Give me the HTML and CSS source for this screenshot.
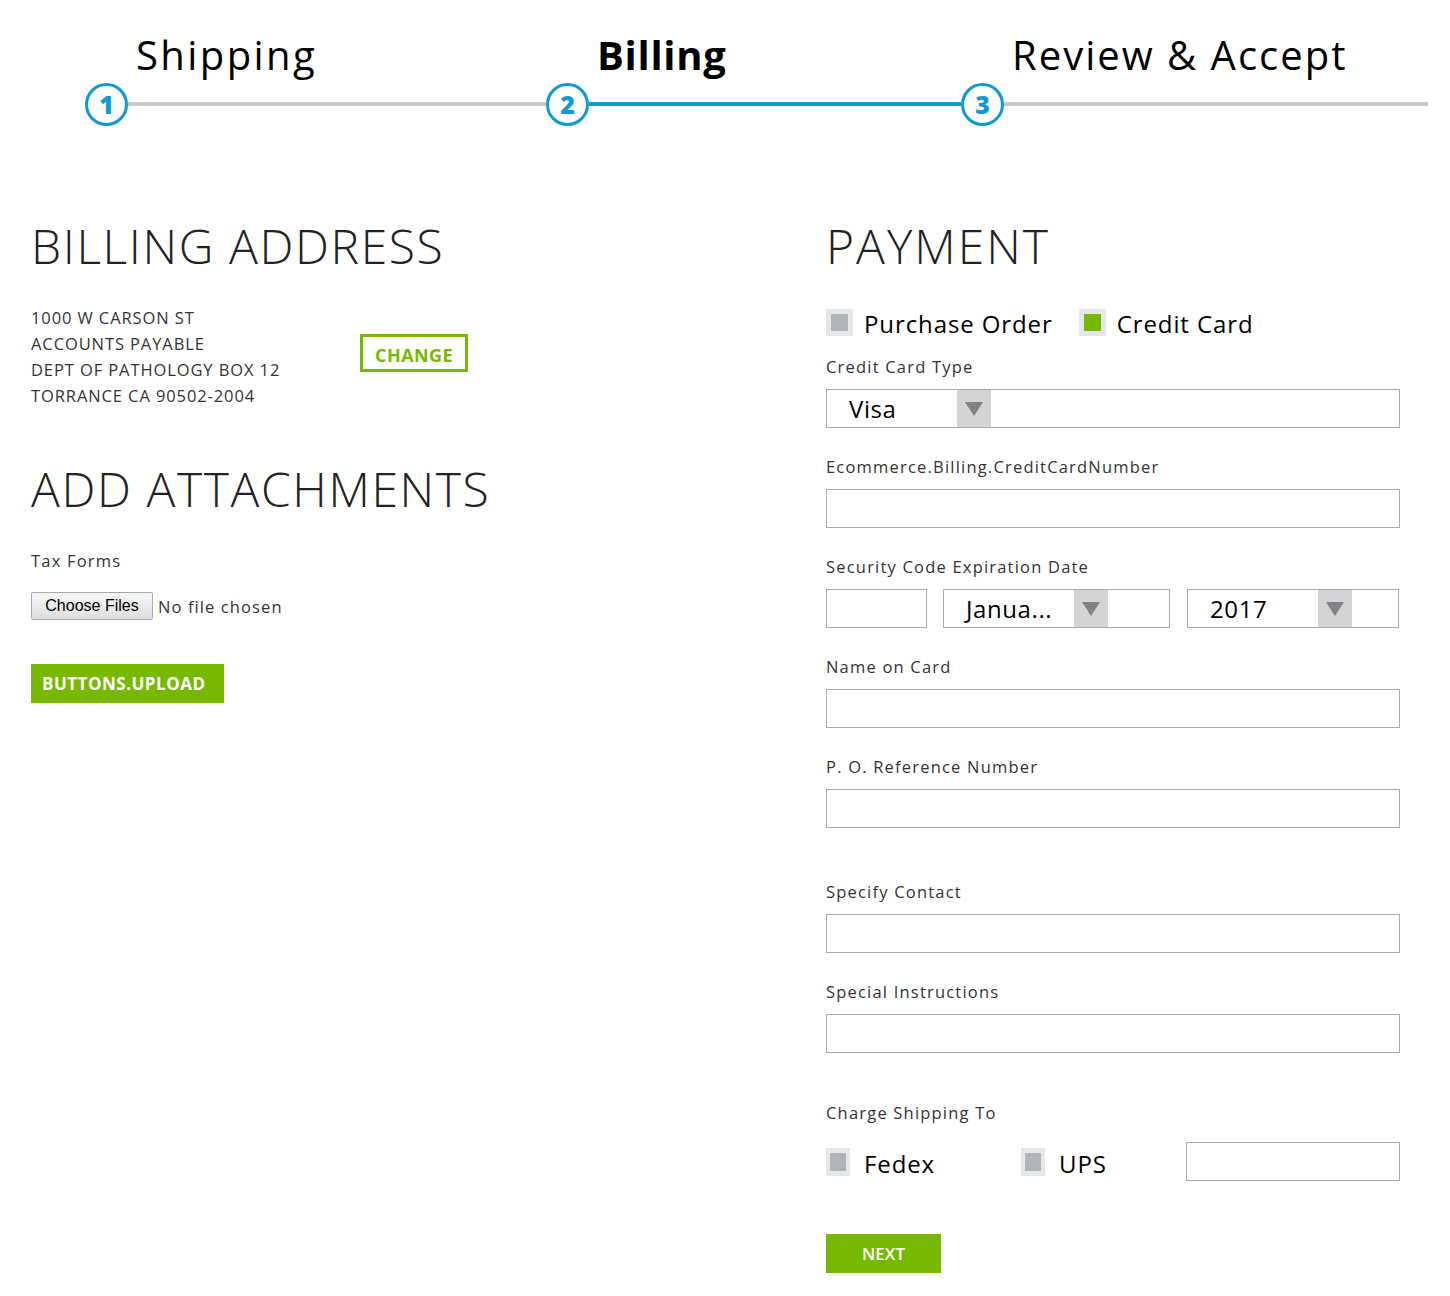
FILE: index.html
```html
<!DOCTYPE html>
<html lang="en">
<head>
  <meta charset="UTF-8" />
  <title>Checkout - Billing</title>
  <link rel="stylesheet" href="styles.css">
</head>
<body>
  <div class="stepper">
    <div class="step done">
      <div class="step-label">Shipping</div>
      <div class="track"><span class="dot">1</span><span class="bar"></span></div>
    </div>
    <div class="step current">
      <div class="step-label">Billing</div>
      <div class="track"><span class="dot">2</span><span class="bar"></span></div>
    </div>
    <div class="step last">
      <div class="step-label">Review &amp; Accept</div>
      <div class="track"><span class="dot">3</span><span class="bar"></span></div>
    </div>
  </div>

  <div class="main">
    <div class="left">
      <h2>BILLING ADDRESS</h2>
      <div class="address-row">
        <div class="address">
          1000 W CARSON ST<br>
          ACCOUNTS PAYABLE<br>
          DEPT OF PATHOLOGY BOX 12<br>
          TORRANCE CA 90502-2004
        </div>
        <button class="btn-outline">CHANGE</button>
      </div>

      <h2 class="attach-title">ADD ATTACHMENTS</h2>
      <div class="label">Tax Forms</div>
      <div class="file-row">
        <span class="file-btn">Choose Files</span>
        <span class="file-name">No file chosen</span>
      </div>
      <button class="btn-green upload">BUTTONS.UPLOAD</button>
    </div>

    <div class="right">
      <h2>PAYMENT</h2>
      <div class="check-row">
        <span class="check"><span class="box"></span>Purchase Order</span>
        <span class="check on"><span class="box"></span>Credit Card</span>
      </div>

      <div class="field">
        <div class="label">Credit Card Type</div>
        <div class="select"><span class="sel-text">Visa</span><span class="arrow"></span></div>
      </div>

      <div class="field">
        <div class="label">Ecommerce.Billing.CreditCardNumber</div>
        <div class="input"></div>
      </div>

      <div class="field">
        <div class="label">Security Code Expiration Date</div>
        <div class="exp-row">
          <div class="input cvv"></div>
          <div class="select month"><span class="sel-text">Janua...</span><span class="arrow"></span></div>
          <div class="select year"><span class="sel-text">2017</span><span class="arrow"></span></div>
        </div>
      </div>

      <div class="field">
        <div class="label">Name on Card</div>
        <div class="input"></div>
      </div>

      <div class="field">
        <div class="label">P. O. Reference Number</div>
        <div class="input"></div>
      </div>

      <div class="field spaced">
        <div class="label">Specify Contact</div>
        <div class="input"></div>
      </div>

      <div class="field">
        <div class="label">Special Instructions</div>
        <div class="input"></div>
      </div>

      <div class="field spaced ship">
        <div class="label">Charge Shipping To</div>
        <div class="ship-row">
          <span class="check small fedex"><span class="box"></span>Fedex</span>
          <span class="check small ups"><span class="box"></span>UPS</span>
          <div class="input account"></div>
        </div>
      </div>

      <button class="btn-green next">NEXT</button>
    </div>
  </div>
</body>
</html>
```

FILE: styles.css
```css
:root {
  --green: #76b900;
  --blue: #0f9bd1;
  --line: #c5c7c9;
  --text: #333333;
  --border: #aaaaaa;
}

body {
  margin: 0;
  font-family: "Open Sans", Arial, sans-serif;
  color: var(--text);
  background: #fff;
}

/* stepper */
.stepper {
  display: grid;
  grid-template-columns: 461px 415px 467px;
  padding: 30px 0 0 85px;
}

.step-label {
  margin-left: 51px;
  font-size: 40px;
  line-height: 50px;
  color: #000;
  letter-spacing: 2.4px;
  white-space: nowrap;
}

.last .step-label {
  letter-spacing: 2px;
}

.current .step-label {
  font-weight: 700;
  letter-spacing: 0.7px;
}

.track {
  display: flex;
  align-items: center;
  height: 44px;
  margin-top: 2px;
}

.dot {
  box-sizing: border-box;
  width: 43px;
  height: 43px;
  flex: none;
  border: 3px solid var(--blue);
  border-radius: 50%;
  display: flex;
  align-items: center;
  justify-content: center;
  color: var(--blue);
  font-weight: 800;
  font-size: 25px;
  line-height: 1;
}

.bar {
  flex: 1;
  height: 4px;
  background: var(--line);
}

.current .bar {
  background: var(--blue);
}

/* main layout */
.main {
  display: grid;
  grid-template-columns: 795px 574px;
  padding: 92px 0 0 31px;
}

h2 {
  margin: 0;
  font-size: 48px;
  font-weight: 300;
  line-height: 55px;
  letter-spacing: 1.6px;
  color: #222;
}

.right h2 {
  letter-spacing: 2px;
}

.label {
  font-size: 16.5px;
  line-height: 26px;
  letter-spacing: 1.2px;
  color: var(--text);
}

/* left column */
.address-row {
  display: flex;
  align-items: center;
  margin-top: 32px;
}

.address {
  width: 329px;
  font-size: 16.5px;
  line-height: 26px;
  letter-spacing: 0.9px;
}

.btn-outline {
  box-sizing: border-box;
  width: 108px;
  height: 38px;
  margin-top: -8px;
  border: 3px solid var(--green);
  background: #fff;
  color: var(--green);
  font-family: inherit;
  font-weight: 700;
  font-size: 18px;
  letter-spacing: 0.4px;
  padding: 4px 0 0;
  cursor: pointer;
}

.attach-title {
  margin-top: 52px;
}

.left .label {
  margin-top: 32px;
}

.file-row {
  display: flex;
  align-items: center;
  margin-top: 18px;
}

.file-btn {
  box-sizing: border-box;
  width: 122px;
  height: 28px;
  border: 1px solid #a9a9a9;
  border-radius: 2px;
  background: linear-gradient(#f6f6f6, #dedede);
  font-family: Arial, "Liberation Sans", sans-serif;
  font-size: 16px;
  color: #000;
  display: flex;
  align-items: center;
  justify-content: center;
}

.file-name {
  margin-left: 5px;
  font-size: 16.5px;
  letter-spacing: 1.1px;
}

.btn-green {
  display: block;
  height: 39px;
  border: none;
  background: var(--green);
  color: #fff;
  font-family: inherit;
  font-size: 17px;
  cursor: pointer;
}

.upload {
  width: 193px;
  margin-top: 44px;
  padding: 0 0 0 11px;
  text-align: left;
  font-weight: 700;
  letter-spacing: 0.5px;
}

/* right column */
.check-row {
  display: flex;
  margin-top: 35px;
  height: 28px;
}

.check {
  display: flex;
  align-items: center;
  font-size: 24px;
  color: #000;
  letter-spacing: 0.9px;
  padding-top: 3px;
}

.box {
  box-sizing: border-box;
  width: 27px;
  height: 27px;
  margin-right: 11px;
  margin-top: -3px;
  border: 5px solid #e6e7e8;
  background: #b1b4b7;
}

.check.on {
  margin-left: 26px;
}

.on .box {
  background: var(--green);
}

.field {
  margin-top: 18px;
}

.field + .field {
  margin-top: 26px;
}

.field + .field.spaced {
  margin-top: 51px;
}

.field + .field.ship {
  margin-top: 47px;
}

.field .label {
  margin-bottom: 9px;
}

.input,
.select {
  box-sizing: border-box;
  height: 39px;
  border: 1px solid var(--border);
  background: #fff;
}

.select {
  display: flex;
  align-items: stretch;
}

.sel-text {
  width: 108px;
  padding-left: 22px;
  font-size: 24px;
  line-height: 37px;
  color: #000;
  letter-spacing: 0.6px;
  white-space: nowrap;
}

.arrow {
  width: 34px;
  background: #d4d4d4;
  position: relative;
}

.arrow::after {
  content: "";
  position: absolute;
  left: 8px;
  top: 12px;
  border-left: 9px solid transparent;
  border-right: 9px solid transparent;
  border-top: 14px solid #808285;
}

.exp-row {
  display: flex;
}

.cvv {
  width: 101px;
}

.month {
  width: 227px;
  margin-left: 16px;
}

.year {
  width: 212px;
  margin-left: 17px;
}

.ship .label {
  margin-bottom: 16px;
}

.ship-row {
  display: flex;
  align-items: center;
}

.small .box {
  width: 24px;
  height: 28px;
  border-width: 5px 4px;
  margin-right: 14px;
}

.fedex {
  width: 195px;
}

.ups {
  width: 165px;
}

.account {
  width: 214px;
}

.next {
  width: 115px;
  margin-top: 53px;
  font-weight: 600;
}
```
